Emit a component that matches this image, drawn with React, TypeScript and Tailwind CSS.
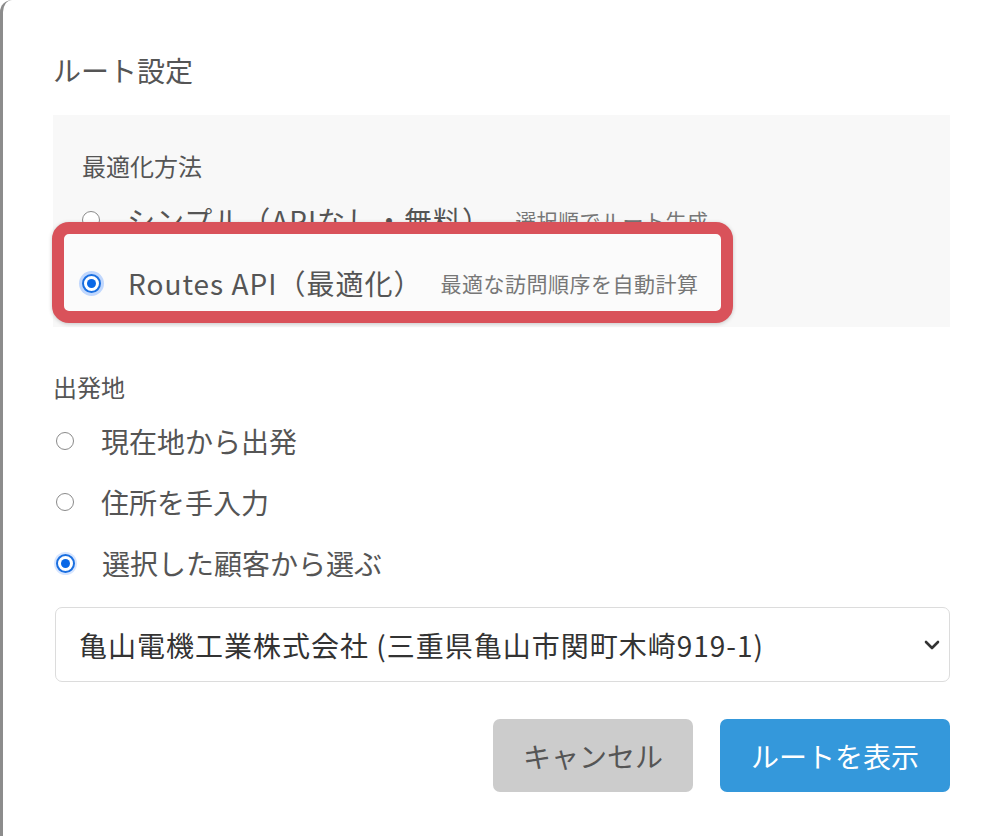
import React, { useState } from 'react';

const font = "font-['Noto_Sans_CJK_JP','Noto_Sans',sans-serif]";

function Radio({ checked, glow }: { checked: boolean; glow?: boolean }) {
  if (checked) {
    return (
      <span
        className={`flex items-center justify-center w-[19px] h-[19px] rounded-full border-2 border-[#1a6fe0] bg-white shrink-0 ${
          glow ? 'shadow-[0_0_0_3px_rgba(120,170,255,0.45)]' : 'shadow-[0_0_0_2px_rgba(120,170,255,0.3)]'
        }`}
      >
        <span className="w-[9px] h-[9px] rounded-full bg-[#0a68e6]" />
      </span>
    );
  }
  return <span className="w-[18px] h-[18px] rounded-full border-[1.5px] border-[#8a8a8a] bg-white shrink-0" />;
}

export default function App() {
  const [method, setMethod] = useState('routes');
  const [origin, setOrigin] = useState('customer');

  const origins = [
    { id: 'current', label: '現在地から出発' },
    { id: 'manual', label: '住所を手入力' },
    { id: 'customer', label: '選択した顧客から選ぶ' },
  ];

  return (
    <div className={`relative w-[1000px] min-h-[836px] bg-white border-l-[3px] border-[#8c8c8c] rounded-tl-[12px] overflow-hidden pl-[50px] pr-[50px] ${font}`}>
      {/* Title */}
      <div className="mt-[50px] h-[40px] leading-[40px] text-[28px] text-[#555]">ルート設定</div>

      {/* Optimization method panel */}
      <div className="mt-[25px] bg-[#f8f8f8] pl-[29px] pt-[36px] pb-[24px]">
        <div className="h-[30px] leading-[30px] text-[24px] text-[#555]">最適化方法</div>
        <div className="mt-[19px] flex flex-col gap-[21px]">
          <div className="flex items-center h-[40px] cursor-pointer" onClick={() => setMethod('simple')}>
            <Radio checked={method === 'simple'} />
            <span className="ml-[27px] text-[28px] text-[#555] leading-[40px] tracking-[1px]">シンプル（APIなし・無料）</span>
            <span className="ml-[24px] text-[21px] text-[#777] leading-[40px] tracking-[0.5px]">選択順でルート生成</span>
          </div>
          <div className="relative z-10 flex items-center h-[40px] mt-[2px] cursor-pointer" onClick={() => setMethod('routes')}>
            <Radio checked={method === 'routes'} glow />
            <span className="ml-[27px] text-[28px] text-[#555] leading-[40px] tracking-[1px]">Routes API（最適化）</span>
            <span className="ml-[18px] text-[21px] text-[#777] leading-[40px] tracking-[0.5px]">最適な訪問順序を自動計算</span>
          </div>
        </div>
      </div>

      {/* Highlight annotation */}
      <div className="absolute left-[49px] top-[222px] w-[681px] h-[101px] border-[12px] border-[#d9525a] rounded-[17px] bg-[#fbfbfb] shadow-[0_1px_4px_rgba(0,0,0,0.2)]" />

      {/* Origin */}
      <div className="mt-[45px] h-[30px] leading-[30px] text-[24px] text-[#555]">出発地</div>
      <div className="mt-[19px] flex flex-col gap-[21px]">
        {origins.map(o => (
          <div key={o.id} className="flex items-center h-[40px] pl-[3px] cursor-pointer" onClick={() => setOrigin(o.id)}>
            <Radio checked={origin === o.id} />
            <span className="ml-[27px] text-[28px] text-[#555] leading-[40px]">{o.label}</span>
          </div>
        ))}
      </div>

      {/* Customer select */}
      <div className="mt-[24px] ml-[2px] h-[75px] flex items-center justify-between border border-[#dcdcdc] rounded-[7px] pl-[23px] pr-[9px] bg-white">
        <span className="text-[28px] text-[#333] leading-[40px] tracking-[1px]">亀山電機工業株式会社 (三重県亀山市関町木崎919-1)</span>
        <svg width="16" height="10" viewBox="0 0 16 10" className="shrink-0">
          <path d="M2 2 L8 8 L14 2" fill="none" stroke="#333" strokeWidth="2.6" strokeLinecap="round" strokeLinejoin="round" />
        </svg>
      </div>

      {/* Buttons */}
      <div className="mt-[37px] flex justify-end gap-[27px]">
        <button className="w-[200px] h-[73px] rounded-[7px] bg-[#cccccc] text-[28px] text-[#555]">キャンセル</button>
        <button className="w-[230px] h-[73px] rounded-[7px] bg-[#3498db] text-[28px] text-white">ルートを表示</button>
      </div>
    </div>
  );
}
